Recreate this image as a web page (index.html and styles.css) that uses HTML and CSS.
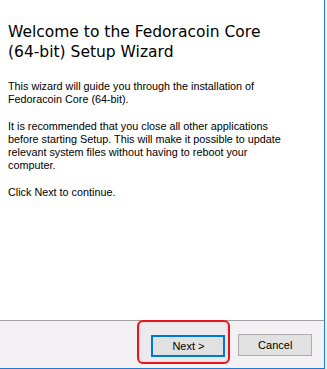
FILE: index.html
```html
<!DOCTYPE html>
<html>
<head>
<meta charset="utf-8">
<link rel="stylesheet" href="styles.css">
</head>
<body>
<div class="window">
  <div class="content">
    <h1 class="title">Welcome to the Fedoracoin Core (64-bit) Setup Wizard</h1>
    <p class="text">This wizard will guide you through the installation of Fedoracoin Core (64-bit).</p>
    <p class="text">It is recommended that you close all other applications before starting Setup. This will make it possible to update relevant system files without having to reboot your computer.</p>
    <p class="text">Click Next to continue.</p>
  </div>
  <div class="footer">
    <div class="highlight">
      <button class="btn btn-default">Next &gt;</button>
    </div>
    <button class="btn btn-cancel">Cancel</button>
  </div>
</div>
</body>
</html>
```
FILE: styles.css
```css
html, body {
  margin: 0;
  padding: 0;
  background: #f4f1f4;
}
.window {
  width: 324px;
  height: 368px;
  border-right: 1px solid #1c7bd4;
  border-bottom: 1px solid #1c7bd4;
  display: flex;
  flex-direction: column;
  font-family: "Liberation Sans", Arial, sans-serif;
  color: #000;
}
.content {
  background: #fff;
  height: 321px;
  box-sizing: border-box;
  padding: 22px 8px 0 8px;
  border-bottom: 1px solid #a0a0a0;
}
.title {
  font-family: "DejaVu Sans", Verdana, sans-serif;
  font-weight: normal;
  font-size: 15.5px;
  line-height: 20px;
  margin: 0 0 18px 0;
  width: 280px;
}
.text {
  font-size: 10.8px;
  line-height: 13px;
  margin: 0 0 14px 0;
  width: 282px;
}
.footer {
  flex: 1;
  background: #f4f1f4;
  display: flex;
  align-items: flex-start;
  padding: 0 12px 0 137px;
  box-sizing: border-box;
}
.highlight {
  width: 94px;
  height: 44px;
  box-sizing: border-box;
  border: 2px solid #e8141c;
  border-radius: 6px;
  background: #eceaec;
  display: flex;
  align-items: flex-start;
  justify-content: flex-end;
  padding: 13px 3px 0 0;
  margin-top: -1px;
  margin-right: 8px;
  box-shadow: inset 0 0 3px rgba(0,0,0,0.12);
}
.btn {
  font-family: "Liberation Sans", Arial, sans-serif;
  font-size: 11px;
  color: #000;
  background: #e1e1e1;
  width: 74px;
  height: 22px;
  box-sizing: border-box;
  padding: 0;
  margin: 0;
}
.btn-default {
  border: 2px solid #0078d7;
}
.btn-cancel {
  border: 1px solid #adadad;
  margin-top: 13px;
}
```
